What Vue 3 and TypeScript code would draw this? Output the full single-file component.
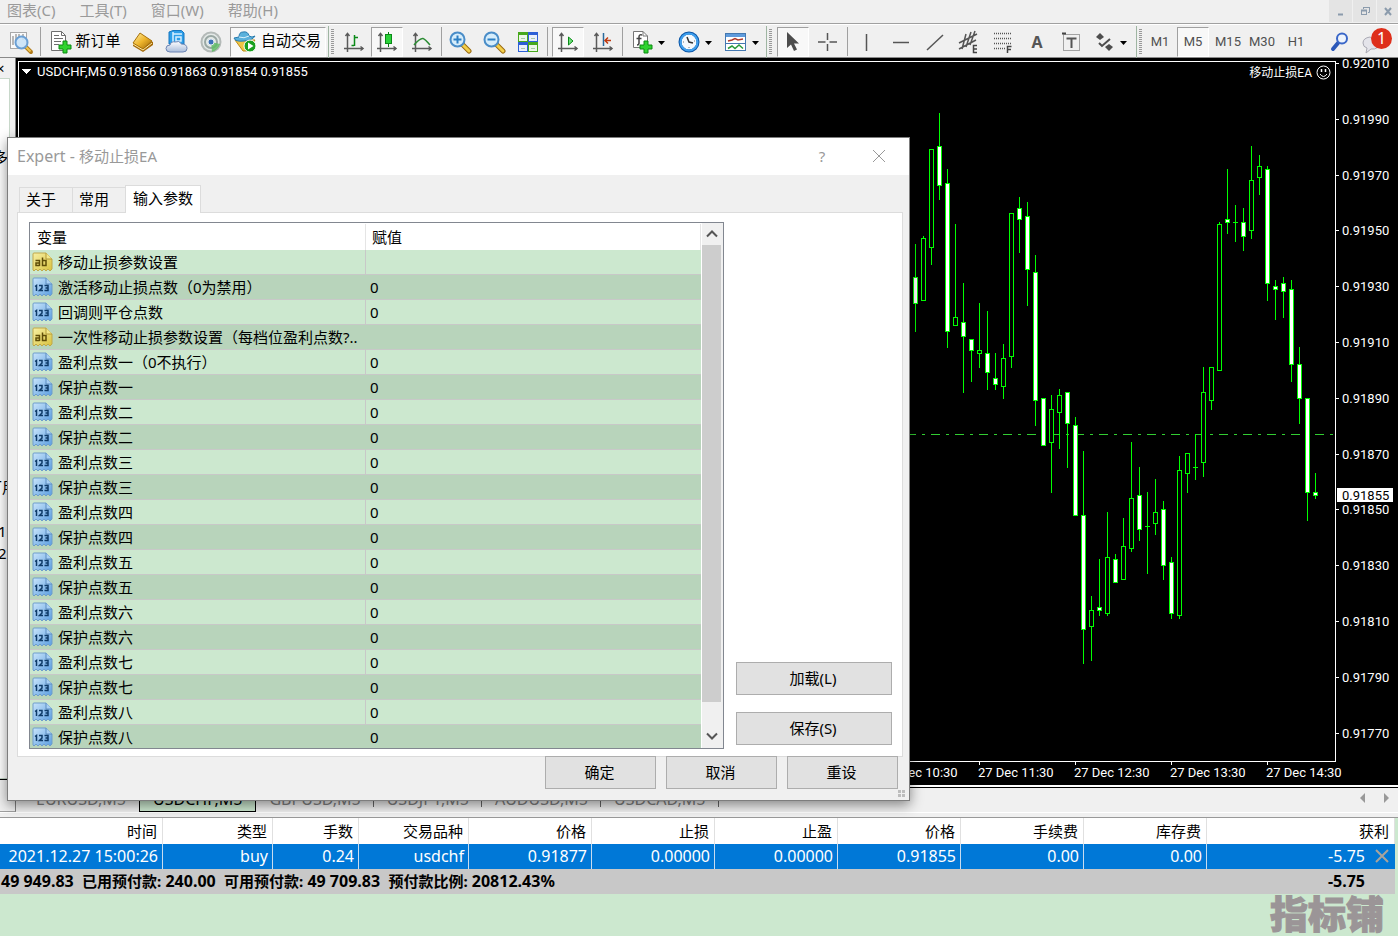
<script setup lang="ts">
import { ref } from 'vue'

interface Param { name: string; text?: boolean; value: string }
type Candle = [x: number, high: number, top: number, bottom: number, low: number, bear: 0 | 1]

const menus = ['图表(C)', '工具(T)', '窗口(W)', '帮助(H)']

const nums = ['一', '二', '三', '四', '五', '六', '七', '八']
const params: Param[] = [
  { name: '移动止损参数设置', text: true, value: '' },
  { name: '激活移动止损点数（0为禁用）', value: '0' },
  { name: '回调则平仓点数', value: '0' },
  { name: '一次性移动止损参数设置（每档位盈利点数?..', text: true, value: '' },
  ...nums.flatMap((n, i) => [
    { name: `盈利点数${n}${i === 0 ? '（0不执行）' : ''}`, value: '0' },
    { name: `保护点数${n}`, value: '0' },
  ]),
]

const dialogTabs = ['关于', '常用', '输入参数']
const activeTab = ref(2)
const timeframes = ['M1', 'M5', 'M15', 'M30', 'H1']
const frame = ref('M5')
const symbols = ['EURUSD,M5', 'USDCHF,M5', 'GBPUSD,M5', 'USDJPY,M5', 'AUDUSD,M5', 'USDCAD,M5']

const headers = ['时间', '类型', '手数', '交易品种', '价格', '止损', '止盈', '价格', '手续费', '库存费', '获利']
const order = ['2021.12.27 15:00:26', 'buy', '0.24', 'usdchf', '0.91877', '0.00000', '0.00000', '0.91855', '0.00', '0.00']

const candles: Candle[] = [
  [907, 270, 280, 352, 360, 0],
  [915, 244, 277, 304, 332, 1], [923, 236, 238, 301, 301, 0], [931, 149, 149, 248, 265, 0],
  [939, 113, 146, 186, 200, 1], [947, 169, 183, 332, 348, 1], [955, 224, 317, 326, 326, 0],
  [963, 283, 322, 337, 393, 1], [971, 339, 339, 351, 382, 1], [979, 303, 350, 354, 368, 0],
  [987, 311, 353, 373, 390, 1], [995, 353, 378, 385, 390, 1], [1003, 344, 358, 387, 399, 0],
  [1011, 213, 213, 357, 368, 0], [1019, 197, 208, 220, 253, 1], [1027, 202, 216, 270, 306, 1],
  [1035, 255, 272, 401, 426, 1], [1043, 398, 398, 446, 446, 1], [1051, 395, 409, 443, 493, 0],
  [1059, 389, 395, 413, 449, 0], [1067, 392, 392, 424, 468, 1], [1075, 417, 425, 516, 516, 1],
  [1083, 451, 515, 630, 664, 1], [1091, 596, 610, 627, 661, 0], [1099, 559, 607, 611, 616, 1],
  [1107, 512, 557, 614, 616, 0], [1115, 554, 559, 583, 583, 1], [1123, 518, 546, 580, 580, 0],
  [1131, 442, 498, 549, 552, 0], [1139, 467, 495, 530, 541, 1], [1147, 492, 526, 527, 574, 0],
  [1155, 479, 512, 524, 535, 0], [1163, 501, 509, 566, 580, 1], [1171, 557, 562, 614, 619, 1],
  [1179, 456, 470, 616, 619, 0], [1187, 453, 453, 474, 493, 0], [1195, 434, 467, 468, 480, 0],
  [1203, 367, 392, 463, 477, 0], [1211, 367, 367, 401, 410, 0], [1219, 222, 224, 371, 371, 0],
  [1227, 169, 219, 223, 234, 1], [1235, 205, 222, 223, 242, 0], [1243, 208, 222, 237, 251, 1],
  [1251, 146, 180, 231, 239, 0], [1259, 155, 166, 178, 195, 0], [1267, 166, 169, 284, 301, 1],
  [1275, 280, 286, 290, 320, 1], [1283, 277, 283, 292, 318, 1], [1291, 280, 289, 365, 382, 1],
  [1299, 347, 364, 399, 424, 1], [1307, 398, 398, 493, 521, 1], [1315, 473, 492, 496, 499, 1],
]

const prices = Array.from({ length: 13 }, (_, i) => ({
  label: (0.9201 - i * 0.0002).toFixed(5),
  y: Math.round(63 + i * 55.8),
}))
const times = ['10:30', '11:30', '12:30', '13:30', '14:30'].map((t, i) => ({ label: `27 Dec ${t}`, x: 882 + i * 96 }))
</script>

<template>
  <div class="terminal">
    <header class="menubar">
      <nav class="menus">
        <button v-for="m in menus" :key="m" class="menu">{{ m }}</button>
      </nav>
      <div class="winctl">
        <button aria-label="最小化"><svg width="12" height="12"><path d="M3 9.500H8" stroke="#8b9bac" stroke-width="2" /></svg></button>
        <button aria-label="还原"><svg width="12" height="12" fill="none" stroke="#8b9bac"><path d="M4.500 4V2.500H10.500V7.500H9M4 2.500H11" /><rect x="2.500" y="5.500" width="5" height="4" /><path d="M2 5.500H8" stroke-width="2" /></svg></button>
        <button aria-label="关闭"><svg width="12" height="12"><path d="M3 3L9 10M9 3L3 10" stroke="#8b9bac" stroke-width="2" /></svg></button>
      </div>
    </header>

    <div class="toolbar">
      <svg width="0" height="0" class="defs">
        <defs>
          <linearGradient id="gold" x1="0" y1="0" x2="1" y2="1"><stop offset="0" stop-color="#fff0a8" /><stop offset=".5" stop-color="#eeb52c" /><stop offset="1" stop-color="#9a6306" /></linearGradient>
          <linearGradient id="blue" x1="0" y1="0" x2="1" y2="1"><stop offset="0" stop-color="#c9e5fb" /><stop offset="1" stop-color="#5b9ee0" /></linearGradient>
          <linearGradient id="yellow" x1="0" y1="0" x2="1" y2="1"><stop offset="0" stop-color="#f7f0a4" /><stop offset="1" stop-color="#d9c23e" /></linearGradient>
          <linearGradient id="cloud" x1="0" y1="0" x2="0" y2="1"><stop offset="0" stop-color="#fff" /><stop offset="1" stop-color="#a9bcda" /></linearGradient>
          <g id="axes" fill="none" stroke="#5a5a5a" stroke-width="1.500"><path d="M5.500 22V4M2 18.500H21" /><path d="M3.500 6L5.500 3.500L7.500 6M18.500 16.500L21 18.500L18.500 20.500" /></g>
          <g id="lens"><path d="M15 15L21 21" stroke="#9a6a10" stroke-width="5" stroke-linecap="round" /><path d="M15 15L21 21" stroke="#f3cf4a" stroke-width="3" stroke-linecap="round" /><circle cx="9.500" cy="9.500" r="7" fill="#d6edfb" stroke="#4a8dc8" stroke-width="2" /></g>
          <path id="plus" d="M14 9H18V13H22V17H18V21H14V17H10V13H14Z" fill="#2fd32f" stroke="#0c8a12" />
          <path id="caret" d="M0 0H7L3.500 4Z" fill="#000" />
          <g id="num">
            <path d="M1 2Q1 1 2 1H14L20 7V17L18 19L16 17L14 19L12 17L10 19L8 17L6 19L4 17L2 19L1 18Z" fill="url(#blue)" stroke="#6e9dcb" />
            <path d="M14 1V7H20" fill="#a8d0f4" stroke="#5c8dc0" />
            <path d="M3 9.500L4.500 8.500V14M7 8.500H10V11L7.500 13.500H11M12.500 8.500H16V13.500H12.500M13.500 11H16" fill="none" stroke="#0d3a68" stroke-width="1.500" />
          </g>
          <g id="str">
            <path d="M1 2Q1 1 2 1H14L20 7V17L18 19L16 17L14 19L12 17L10 19L8 17L6 19L4 17L2 19L1 18Z" fill="url(#yellow)" stroke="#c0a84a" />
            <path d="M14 1V7H20" fill="#f3e88c" stroke="#b39b3a" />
            <path d="M3.500 8.500H7.500V14M7.500 11H4V13.500H7.500M10.500 5.500V13.500H14V8.500H10.500" fill="none" stroke="#5f4d08" stroke-width="1.500" />
          </g>
        </defs>
      </svg>

      <button class="tool first" aria-label="图表窗口">
        <svg width="26" height="26"><rect x="2.500" y="3.500" width="16" height="16" fill="#fafafa" stroke="#a8a8a8" /><path d="M5 16V7M8 12V5M11 9V5M15 11V5" stroke="#777" /><path d="M18 18L23 23" stroke="#b07a1a" stroke-width="4" stroke-linecap="round" /><path d="M18 18L22.500 22.500" stroke="#efc650" stroke-width="2" /><circle cx="13.500" cy="13.500" r="6" fill="#c9e2f7" fill-opacity=".9" stroke="#6a9fd4" stroke-width="2" /></svg>
      </button>
      <span class="sep s6"></span>
      <button class="tool neworder">
        <svg width="24" height="26"><path d="M2.500 2.500H12.500L16.500 6.500V21.500H2.500Z" fill="#fff" stroke="#6e6e6e" /><path d="M12.500 2.500V6.500H16.500M5 6.500H10M5 9.500H14M5 12.500H12M5 15.500H10" fill="none" stroke="#6e6e6e" /><use href="#plus" y="3" /></svg>
        <span>新订单</span>
      </button>
      <button class="tool" aria-label="市场"><svg width="24" height="24"><path d="M2 13L9 5L22 12V15L12 22L2 16Z" fill="#a56c0c" /><path d="M2 13L9 3L21 11L12 19Z" fill="url(#gold)" stroke="#a8720c" /><path d="M2 14L12 20L21 13" fill="none" stroke="#ffe9a0" /></svg></button>
      <button class="tool" aria-label="云"><svg width="26" height="26"><path d="M5 3L9 1.500H17.500L20 4V15H5Z" fill="#2d9ee8" stroke="#1677c0" /><path d="M9 3V14M9 5H18M12 8H17V12H12Z" fill="none" stroke="#d5efff" stroke-width="1.500" /><path d="M6 23Q2 23 2 19.500Q2 16 6 16Q7 12 11.500 13Q15 11 17.500 15Q23 15 23 19.500Q23 23 19 23Z" fill="url(#cloud)" stroke="#6c84b4" /></svg></button>
      <button class="tool" aria-label="信号"><svg width="24" height="24"><circle cx="12" cy="12" r="9.500" fill="#e4e9e7" stroke="#b4bab8" stroke-width="2" /><circle cx="12" cy="12" r="6" fill="none" stroke="#9aa8a4" stroke-width="2" /><path d="M12 12L13 22Q19 20 21 14Z" fill="#5dbb62" fill-opacity=".8" /><circle cx="12" cy="12" r="3" fill="#3d72b8" stroke="#dfe8f0" /></svg></button>
      <button class="tool auto pressed">
        <svg width="26" height="26"><path d="M3 11L23 11L15 22L11 22Z" fill="#f0c544" stroke="#bd8a16" /><path d="M2 9Q3 13 12 12Q21 11 23 7Q20 9 17 7Q16 2 11 3Q7 3 7 8Z" fill="#5ab1dc" stroke="#2a7caf" /><path d="M7 8Q12 10 17 7" stroke="#d8f0fb" fill="none" /><circle cx="18" cy="17" r="6" fill="#1aa01f" stroke="#fff" /><path d="M16 13.500V20.500L21.500 17Z" fill="#fff" /></svg>
        <span>自动交易</span>
      </button>

      <span class="grip g11"></span>
      <button class="tool" aria-label="柱状图"><svg width="24" height="24"><use href="#axes" /><path d="M12.500 5V16M12 15.500H9.500M13 7.500H16" stroke="#0b8a18" stroke-width="1.500" fill="none" /></svg></button>
      <button class="tool pressed" aria-label="蜡烛图"><svg width="24" height="24"><use href="#axes" /><path d="M13.500 2V17" stroke="#0b7a12" /><rect x="10.500" y="4.500" width="6" height="9" fill="#2bd23a" stroke="#0b8a18" /></svg></button>
      <button class="tool" aria-label="折线图"><svg width="24" height="24"><use href="#axes" /><path d="M4 15Q10 8 13 8.500Q15 9 20 15" stroke="#2c8c34" stroke-width="1.500" fill="none" /></svg></button>
      <span class="sep s4"></span>
      <button class="tool" aria-label="放大"><svg width="24" height="24"><use href="#lens" /><path d="M5.500 9.500H13.500M9.500 5.500V13.500" stroke="#2c7fc4" stroke-width="2" /></svg></button>
      <button class="tool" aria-label="缩小"><svg width="24" height="24"><use href="#lens" /><path d="M5.500 9.500H13.500" stroke="#2c7fc4" stroke-width="2" /></svg></button>
      <button class="tool" aria-label="平铺"><svg width="22" height="22"><rect x="1" y="1" width="10" height="10" fill="#47a81c" /><rect x="11" y="1" width="10" height="10" fill="#2c5fd6" /><rect x="1" y="11" width="10" height="10" fill="#2c5fd6" /><rect x="11" y="11" width="10" height="10" fill="#47a81c" /><path d="M2 4H10V10H2ZM12 4H20V10H12ZM2 14H10V20H2ZM12 14H20V20H12Z" fill="#fff" fill-opacity=".9" /><path d="M4 7.500H8M14 7.500H18M4 17.500H8M14 17.500H18" stroke="#a8c8a8" /></svg></button>
      <span class="sep s7"></span>
      <button class="tool pressed" aria-label="自动滚动"><svg width="24" height="24"><use href="#axes" /><path d="M12.500 7V15L17 11Z" fill="#6fe07a" stroke="#0b8a18" /></svg></button>
      <button class="tool" aria-label="图表平移"><svg width="24" height="24"><use href="#axes" /><path d="M12.500 3V16" stroke="#2a6a9c" stroke-width="1.500" /><path d="M14 10.500H20M17 7.500L14 10.500L17 13.500" stroke="#c03a10" stroke-width="1.500" fill="none" /></svg></button>
      <span class="sep s6"></span>
      <button class="tool split" aria-label="指标"><svg width="41" height="26"><path d="M4.500 2.500H14L18.500 7V18.500H4.500Z" fill="#fff" stroke="#777" /><path d="M14 2.500V7H18.500" fill="none" stroke="#777" /><path d="M13 6Q10 5 10 8V14Q10 16 8 16M7.500 9.500H12.500" fill="none" stroke="#444" stroke-width="1.500" /><use href="#plus" x="1" y="3" /><use href="#caret" x="29" y="12" /></svg></button>
      <button class="tool split" aria-label="周期"><svg width="41" height="26"><circle cx="14" cy="13" r="9" fill="#f4f9fd" stroke="#0d57a8" stroke-width="3" /><circle cx="14" cy="13" r="8.500" fill="none" stroke="#3fa0ee" stroke-width="2" /><path d="M12 8L14 13L18 14" fill="none" stroke="#333" stroke-width="1.500" /><path d="M8 13H9M19 12H20M14 18V19" stroke="#777" /><use href="#caret" x="30" y="12" /></svg></button>
      <button class="tool split" aria-label="模板"><svg width="41" height="26"><rect x="4.500" y="4.500" width="20" height="17" fill="#fff" stroke="#4478b0" /><rect x="5" y="5" width="19" height="3" fill="#5f9bdc" /><path d="M5 14.500H24" stroke="#4478b0" /><path d="M7 12L11 11L14 9.500L17 11L22 10" stroke="#b0392a" stroke-width="1.500" fill="none" /><path d="M7 19.500L11 17L14 19.500L18 16L22 19.500" stroke="#2a9a3a" stroke-width="1.500" fill="none" /><use href="#caret" x="31" y="12" /></svg></button>

      <span class="grip g13"></span>
      <button class="tool pressed" aria-label="光标"><svg width="24" height="24"><path d="M6 2V18L10 14.500L13 21L16 19.500L13 13.500H18Z" fill="#4d4d4d" /></svg></button>
      <button class="tool" aria-label="十字线"><svg width="24" height="24"><path d="M11.500 3V10M11.500 14V21M2 12H9.500M13.500 12H21" stroke="#555" stroke-width="1.500" /></svg></button>
      <span class="sep s5"></span>
      <button class="tool" aria-label="垂直线"><svg width="24" height="24"><path d="M11.500 4V21" stroke="#555" stroke-width="1.500" /></svg></button>
      <button class="tool" aria-label="水平线"><svg width="24" height="24"><path d="M4 12.500H20" stroke="#555" stroke-width="1.500" /></svg></button>
      <button class="tool" aria-label="趋势线"><svg width="24" height="24"><path d="M4 20L20 5" stroke="#555" stroke-width="1.500" /></svg></button>
      <button class="tool" aria-label="等距通道"><svg width="24" height="24"><path d="M2 13L20 4M2 19L19 10M5 19L9 4M9 17L14 2M13 15L18 1" stroke="#555" stroke-width="1.500" /><path d="M20 15.500H16.500V22.500H20M16.500 19H20" stroke="#444" stroke-width="1.500" fill="none" /></svg></button>
      <button class="tool" aria-label="斐波那契"><svg width="24" height="24"><path d="M3 3.500H20M3 8.500H20M3 13.500H20M3 18.500H14" stroke="#555" stroke-width="1.500" stroke-dasharray="1 1" /><path d="M20.500 16.500H16.500V23M16.500 19.500H20" stroke="#444" stroke-width="1.500" fill="none" /></svg></button>
      <button class="tool letter">A</button>
      <button class="tool" aria-label="标签"><svg width="24" height="24"><rect x="4.500" y="4.500" width="16" height="16" fill="none" stroke="#555" stroke-dasharray="1 1" /><path d="M3 3.500H7" stroke="#444" stroke-width="2" /><path d="M7.500 8.500H17.500M12.500 8V18" stroke="#555" stroke-width="2" /></svg></button>
      <button class="tool split" aria-label="图形"><svg width="41" height="26"><path d="M5 8L9 4L13 8L9 11Z" fill="#4d4d4d" /><path d="M14 18L18 15L22 18L18 22Z" fill="#4d4d4d" /><path d="M8 14L11 17L19 10" stroke="#4d4d4d" stroke-width="2" fill="none" /><use href="#caret" x="29" y="12" /></svg></button>

      <span class="grip g9"></span>
      <button v-for="t in timeframes" :key="t" class="tool tf" :class="{ pressed: frame === t }" @click="frame = t">{{ t }}</button>
      <button class="tool find" aria-label="搜索"><svg width="24" height="24"><path d="M11 13L6 19" stroke="#2c58b8" stroke-width="4" stroke-linecap="round" /><circle cx="15" cy="8.500" r="5" fill="#eef4fc" stroke="#3a67c8" stroke-width="2" /></svg></button>
      <button class="tool chat" aria-label="消息">
        <svg width="34" height="28"><path d="M12 9Q5 10 5 15Q5 19 9 20L8 25L13 21Q21 22 21 14Z" fill="#e4e4ea" stroke="#aaaab4" /></svg>
        <span class="badge">1</span>
      </button>
    </div>

    <main class="workspace">
      <aside class="dock">
        <div class="dock-close">×</div>
        <div class="dock-body">
          <p class="d1">多</p><p class="d2">可用</p><p class="d3">1</p><p class="d4">2</p>
        </div>
        <div class="dock-foot"></div>
      </aside>
      <section class="chart">
        <svg width="100%" height="727" viewBox="16 58 1382 727" preserveAspectRatio="xMaxYMin meet">
          <g class="crisp">
            <path d="M18.500 785V61.500H1335.500V761.500H18.500" fill="none" stroke="#fff" />
            <path d="M859 434.500H1335" stroke="#32cd32" stroke-dasharray="9 6 3 6" />
            <g v-for="c in candles" :key="c[0]">
              <rect :x="c[0]" :y="c[1]" width="1" :height="c[4] - c[1]" fill="#0f0" />
              <rect :x="c[0] - 2" :y="c[2]" width="5" :height="c[3] - c[2]" fill="#0f0" />
              <rect v-if="c[3] - c[2] > 2" :x="c[0] - 1" :y="c[2] + 1" width="3" :height="c[3] - c[2] - 2" :fill="c[5] ? '#fff' : '#000'" />
            </g>
            <rect v-for="p in prices" :key="p.y" x="1336" :y="p.y" width="3" height="1" fill="#fff" />
            <rect v-for="t in times" :key="t.x" :x="t.x + 1" y="762" width="1" height="3" fill="#fff" />
            <path d="M22 69H31L26.500 74Z" fill="#fff" />
            <rect x="1337" y="488" width="56" height="14" fill="#fff" />
          </g>
          <text x="37" y="76">USDCHF,M5</text>
          <text x="109" y="76">0.91856 0.91863 0.91854 0.91855</text>
          <text x="1312" y="77" text-anchor="end" class="ea">移动止损EA</text>
          <g fill="none" stroke="#fff"><circle cx="1323.500" cy="72.500" r="6.500" /><path d="M1320 74Q1323.500 79 1327 74" /><path d="M1321.500 69V72M1325.500 69V72" stroke-width="1.500" /></g>
          <text v-for="p in prices" :key="p.label" x="1342" :y="p.y + 5">{{ p.label }}</text>
          <text x="1342" y="500" class="dark">0.91855</text>
          <text v-for="t in times" :key="t.label" :x="t.x" y="777">{{ t.label }}</text>
        </svg>
      </section>
    </main>

    <nav class="symbols">
      <span class="dock-corner"></span>
      <button v-for="(s, i) in symbols" :key="s" class="symbol" :class="{ on: i === 1, line: i > 1 }">{{ s }}</button>
      <span class="arrows"><svg width="32" height="12"><path d="M7 1V11L2 6Z" fill="#999" /><path d="M26 1V11L31 6Z" fill="#999" /></svg></span>
    </nav>

    <section class="trades">
      <table>
        <colgroup><col class="w163"><col class="w110"><col class="w86"><col class="w110"><col v-for="n in 6" :key="n" class="w123"><col></colgroup>
        <thead><tr><th v-for="(h, i) in headers" :key="i">{{ h }}</th></tr></thead>
        <tbody>
          <tr class="order">
            <td v-for="(c, i) in order" :key="i">{{ c }}</td>
            <td class="profit">-5.75<button aria-label="平仓"><svg width="14" height="14"><path d="M1 1L13 13M13 1L1 13" stroke="#a9a39b" stroke-width="2" /></svg></button></td>
          </tr>
          <tr class="balance">
            <td colspan="10">49 949.83&nbsp; <i>已用预付款:</i> 240.00&nbsp; <i>可用预付款:</i> 49 709.83&nbsp; <i>预付款比例:</i> 20812.43%</td>
            <td class="total">-5.75</td>
          </tr>
        </tbody>
      </table>
      <div class="brand">指标铺</div>
    </section>

    <section class="dialog" role="dialog" aria-labelledby="dlg-title">
      <header class="titlebar">
        <h1 id="dlg-title"><span>Expert - </span>移动止损EA</h1>
        <button aria-label="帮助">?</button>
        <button aria-label="关闭"><svg width="14" height="14"><path d="M1 1L13 13M13 1L1 13" stroke="#999" /></svg></button>
      </header>
      <div class="tabs" role="tablist">
        <button v-for="(t, i) in dialogTabs" :key="t" role="tab" :aria-selected="activeTab === i" :class="{ active: activeTab === i }" @click="activeTab = i">{{ t }}</button>
      </div>
      <div class="panel">
        <div class="listbox">
          <div class="rows">
            <table>
              <colgroup><col class="w335"><col></colgroup>
              <thead><tr><th>变量</th><th>赋值</th></tr></thead>
              <tbody>
                <tr v-for="p in params" :key="p.name">
                  <td><div class="name"><svg width="21" height="21"><use :href="p.text ? '#str' : '#num'" /></svg><span>{{ p.name }}</span></div></td>
                  <td>{{ p.value }}</td>
                </tr>
              </tbody>
            </table>
          </div>
          <div class="scroll">
            <button aria-label="向上"><svg width="12" height="8"><path d="M1 6.500L6 1.500L11 6.500" fill="none" stroke="#555" stroke-width="2" /></svg></button>
            <div class="thumb"></div>
            <button class="down" aria-label="向下"><svg width="12" height="8"><path d="M1 1.500L6 6.500L11 1.500" fill="none" stroke="#555" stroke-width="2" /></svg></button>
          </div>
        </div>
        <div class="side">
          <button class="btn">加载(L)</button>
          <button class="btn">保存(S)</button>
        </div>
      </div>
      <footer class="actions">
        <button class="btn">确定</button>
        <button class="btn">取消</button>
        <button class="btn">重设</button>
      </footer>
      <svg class="resize" width="8" height="8"><path d="M0 0H3V3H0ZM4 0H7V3H4ZM0 4H3V7H0ZM4 4H7V7H4Z" fill="#bdbdbd" /></svg>
    </section>
  </div>
</template>

<style>
body { margin: 0; background: #cce8cf; }
</style>

<style scoped>
* { box-sizing: border-box; }
.terminal { position: relative; display: flex; flex-direction: column; min-height: 100vh; background: #f0f0f0; color: #000; font: 15px/20px "Noto Sans", "Noto Sans CJK SC", sans-serif; overflow: hidden; }
button { margin: 0; padding: 0; border: 0; background: none; color: inherit; font: inherit; white-space: nowrap; }
svg { display: block; flex: none; }

.menubar { display: flex; justify-content: space-between; height: 24px; border-bottom: 1px solid #a0a0a0; }
.menus { display: flex; gap: 24px; padding-left: 7px; color: #9a9a9a; }
.menu { height: 20px; }
.winctl { display: flex; gap: 1px; }
.winctl button { display: grid; place-items: center; width: 23px; height: 22px; background: #e4e4e4; }
.winctl button:last-child { width: 21px; }

.toolbar { display: flex; align-items: center; height: 34px; padding-top: 1px; border-top: 1px solid #fff; border-bottom: 1px solid #8a8a8a; }
.defs { position: absolute; }
.tool { display: flex; flex: none; align-items: center; justify-content: center; width: 34px; height: 30px; }
.tool.first { margin-left: 4px; }
.tool.neworder { width: 82px; gap: 2px; }
.tool.neworder span, .tool.auto span { padding-bottom: 3px; }
.tool.split { width: 46px; justify-content: flex-start; padding-left: 3px; }
.pressed { width: 32px; margin-right: 2px; border: 1px solid; border-color: #a0a0a0 #fff #fff #a0a0a0; background: #f8f8f8; }
.tool.auto { width: 96px; margin: 0 0 0 2px; padding-right: 3px; gap: 3px; }
.tool.letter { color: #555; font-size: 16px; font-weight: 700; }
.tool.tf { color: #505050; font: 13px/16px Roboto, sans-serif; }
.tool.find { margin-left: 9px; }
.tool.chat { position: relative; margin-left: 2px; }
.badge { position: absolute; top: 1px; left: 13px; width: 21px; height: 21px; border-radius: 50%; background: #de2f1b; color: #fff; font-size: 16px; line-height: 20px; text-align: center; }
.sep { flex: none; align-self: stretch; margin: 1px 0; background: linear-gradient(#a0a0a0, #a0a0a0) 2px 0 / 1px 100% no-repeat; }
.s4 { width: 4px; } .s5 { width: 5px; } .s6 { width: 6px; } .s7 { width: 7px; }
.grip { flex: none; height: 32px; background: repeating-linear-gradient(#999 0 1px, #f0f0f0 1px 2px) 5px 3px / 3px 26px no-repeat, linear-gradient(#9fb5a2, #9fb5a2) 2px 0 / 1px 100% no-repeat; }
.g9 { width: 9px; } .g11 { width: 11px; } .g13 { width: 13px; }

.workspace { display: flex; height: 730px; }
.dock { display: flex; flex: none; flex-direction: column; width: 16px; overflow: hidden; border-right: 1px solid #808080; }
.dock-close { height: 20px; margin-left: -4px; }
.dock-body { height: 701px; margin-right: 5px; border: 1px solid #c8d8ca; border-left: 0; background: #fff; white-space: nowrap; }
.dock-body p { margin: 0; height: 20px; }
.dock-body .d1 { margin: 68px 0 310px -7px; }
.dock-body .d2 { margin: 0 0 24px -13px; }
.dock-body .d3, .dock-body .d4 { margin: 0 0 2px -2px; }
.dock-foot { height: 9px; border-top: 1px solid #000; }
.chart { flex: 1; min-width: 0; border-bottom: 1px solid #000; background: linear-gradient(#000, #000) 0 0 / 100% 727px no-repeat #fff; }
.chart text { fill: #fff; font: 13px Roboto, "Noto Sans CJK SC", sans-serif; }
.chart text.ea { font-size: 12px; }
.chart text.dark { fill: #000; }
.crisp { shape-rendering: crispEdges; }

.symbols { display: flex; height: 30px; border-bottom: 1px solid #999; background: linear-gradient(#fff, #fff) 0 24px / 100% 1px no-repeat; color: #808080; }
.dock-corner { width: 16px; height: 24px; margin-right: 7px; border-right: 1px solid #808080; border-bottom: 1px solid #a0a0a0; }
.symbol { height: 24px; padding: 0 13px 2px; font-size: 16px; }
.symbol.on { border: 1px solid #000; border-top: 0; background: #cce8cf; color: #000; }
.symbol.line { background: linear-gradient(#666, #666) right 0 top 0 / 1px 19px no-repeat; }
.arrows { margin: 4px 8px 0 auto; }

.trades { flex: 1; padding-right: 3px; background: #cce8cf; }
.trades table, .rows table { width: 100%; border-collapse: separate; border-spacing: 0; table-layout: fixed; }
.w163 { width: 163px; } .w110 { width: 110px; } .w86 { width: 86px; } .w123 { width: 123px; }
.trades th { height: 26px; padding: 0 5px 0 0; border-right: 1px solid #e0e0e0; background: #fff; font-weight: 400; text-align: right; }
.trades td { height: 25px; padding: 0 4px 2px 0; text-align: right; font-size: 16px; white-space: nowrap; }
.order td { border-right: 1px solid #c8dcf0; background: #0078d7; color: #fff; }
.order td.profit { display: flex; align-items: center; justify-content: flex-end; gap: 10px; padding-right: 6px; border: 0; }
.balance td { background: #c8c8c8; font-weight: 700; }
.balance td:first-child { padding-left: 1px; text-align: left; }
.balance i { font-style: normal; font-size: 15px; }
.balance td.total { padding-right: 30px; }
.brand { padding-right: 11px; color: #9b9597; font: 900 38px/36px "Noto Sans CJK SC", sans-serif; text-align: right; -webkit-text-stroke: 1px #9b9597; }

.dialog { position: absolute; top: 137px; left: 7px; width: 903px; border: 1px solid #7d7d7d; background: #f0f0f0; box-shadow: 0 4px 12px rgba(0, 0, 0, .45); }
.titlebar { display: flex; align-items: center; height: 37px; padding-right: 23px; background: #fff; color: #999; }
.titlebar h1 { flex: 1; margin: 0; padding: 0 0 2px 9px; font: inherit; white-space: pre; }
.titlebar h1 span { font-size: 16px; }
.titlebar button { width: 14px; margin-left: 43px; padding-bottom: 2px; }
.tabs { display: flex; align-items: flex-end; height: 38px; margin-bottom: -1px; padding-left: 11px; }
.tabs button { position: relative; height: 26px; width: 54px; margin-right: -1px; padding: 0 0 2px 6px; border: 1px solid #dcdcdc; text-align: left; }
.tabs button.active { width: 76px; height: 28px; padding: 0 0 3px 7px; border-bottom: 0; background: #fff; }
.panel { display: flex; gap: 12px; margin: 0 6px 0 9px; padding: 9px 10px 7px 11px; border: 1px solid #dcdcdc; background: #fff; }
.listbox { display: flex; flex: 1; height: 527px; border: 1px solid #828790; background: #fff; }
.rows { flex: 1; height: 525px; padding-top: 1px; overflow: hidden; }
.w335 { width: 336px; }
.rows th { height: 26px; padding: 0 0 0 7px; border-right: 1px solid #e5e5e5; font-weight: 400; text-align: left; }
.rows th:last-child { padding-left: 6px; }
.rows td { height: 25px; padding: 0 0 0 2px; border-bottom: 1px solid #c8c8c8; background: #cce8cf; }
.rows td:first-child { border-right: 1px solid #c8c8c8; }
.rows tr:nth-child(even) td { background: #b8d4bb; }
.rows tr:nth-child(even) td:first-child { border-right-color: #b8d4bb; }
.rows td:last-child { padding-left: 4px; padding-bottom: 1px; }
.name { display: flex; align-items: center; gap: 5px; height: 24px; white-space: nowrap; }
.scroll { display: flex; flex-direction: column; width: 22px; padding-right: 2px; border-left: 1px solid #fff; background: #f0f0f0; }
.scroll button { display: grid; place-items: center; height: 22px; }
.thumb { flex: 1; background: #cdcdcd; }
.scroll .down { height: 46px; padding-top: 21px; }
.side { display: flex; flex-direction: column; justify-content: flex-end; gap: 17px; width: 156px; padding-bottom: 4px; }
.btn { height: 33px; padding: 0 2px 2px 0; border: 1px solid #adadad; background: #e1e1e1; }
.actions { display: flex; justify-content: flex-end; gap: 10px; margin-top: -1px; padding: 0 11px 11px; }
.actions .btn { width: 111px; }
.resize { position: absolute; right: 3px; bottom: 2px; }
</style>
